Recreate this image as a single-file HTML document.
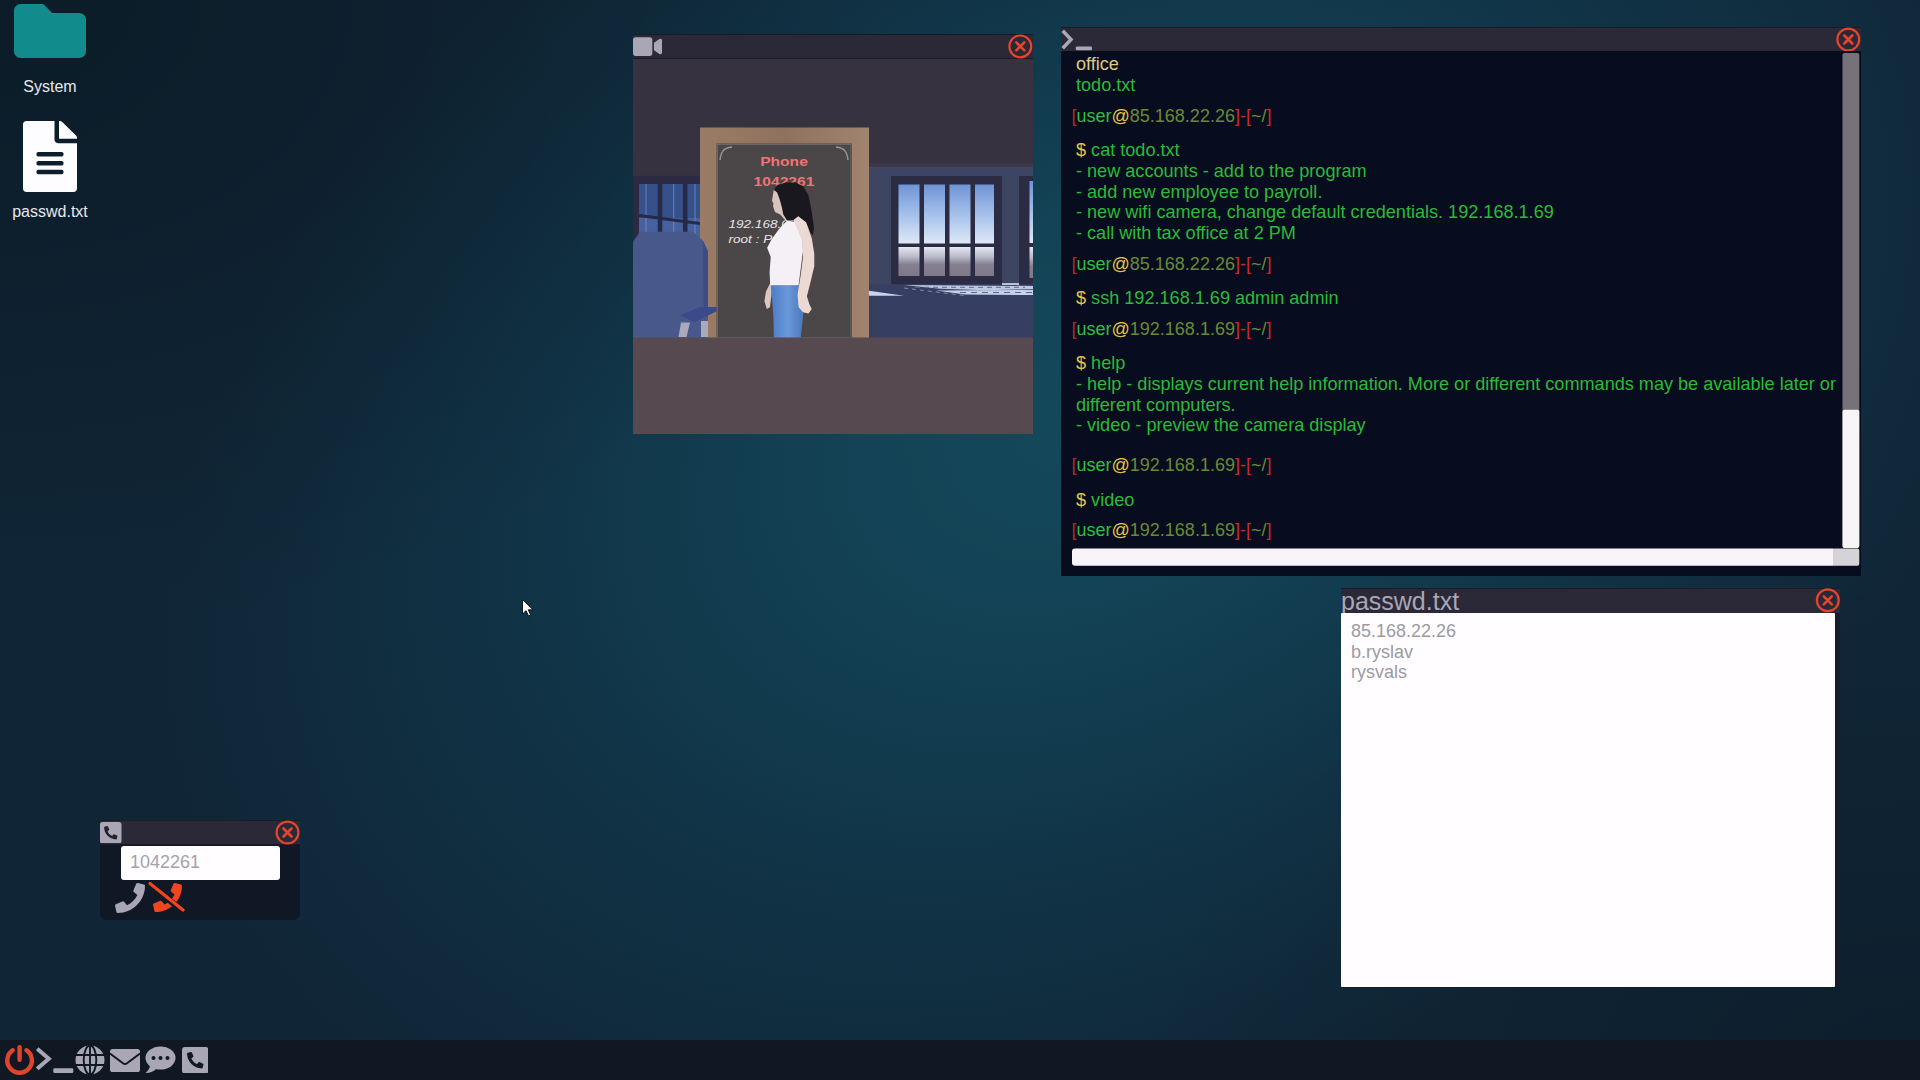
<!DOCTYPE html>
<html lang="en">
<head>
<meta charset="utf-8">
<title>Desktop</title>
<style>
*{box-sizing:border-box;margin:0;padding:0}
html,body{width:1920px;height:1080px;overflow:hidden}
body{position:relative;font-family:"Liberation Sans",sans-serif;background:#102637}
.abs{position:absolute}
.tb{position:absolute;background:#2b2937;border-top:1px solid #1b1a26;border-bottom:1px solid #1b1a26}
.close{position:absolute;width:24px;height:24px}
.lbl{position:absolute;color:#e8e8ee;font-size:16px;line-height:18px;text-align:center;white-space:nowrap}
/* terminal */
#term{position:absolute;left:1061px;top:51px;width:800px;height:525px;background:#070d1e}
#term .l{position:absolute;left:15px;font-size:18.1px;line-height:21px;white-space:nowrap}
#term .p{left:10.500px;font-size:18px}
.r{color:#cc2a2a}.r1{color:#b22828}.g{color:#2cba38}.u{color:#34bc42}.y{color:#e6c648}.o{color:#6a8935}.pale{color:#dfca84}
/* passwd */
#pw{position:absolute;left:1341px;top:613px;width:494px;height:374px;background:#fffdff;border-radius:1px}
#pw div{position:absolute;left:10px;font-size:18px;line-height:21px;color:#9d9ba1;white-space:nowrap}
#taskbar{position:absolute;left:0;top:1040px;width:1920px;height:40px;background:#0f1823}
</style>
</head>
<body>
<svg class="abs" style="left:0;top:0" width="1920" height="1080" viewBox="0 0 1920 1080"><defs>
<radialGradient id="bgg" gradientUnits="userSpaceOnUse" cx="0" cy="0" r="1" gradientTransform="translate(1100 400) rotate(150) scale(1000 700)"><stop offset="0" stop-color="#13495a"/><stop offset=".2" stop-color="#134557"/><stop offset=".4" stop-color="#123d50"/><stop offset=".6" stop-color="#113447"/><stop offset=".8" stop-color="#102d3f"/><stop offset="1" stop-color="#102637"/></radialGradient>
<radialGradient id="c1" gradientUnits="userSpaceOnUse" cx="0" cy="0" r="1" gradientTransform="scale(900 650)"><stop offset="0" stop-color="#000" stop-opacity=".28"/><stop offset="1" stop-color="#000" stop-opacity="0"/></radialGradient>
<radialGradient id="c2" gradientUnits="userSpaceOnUse" cx="0" cy="0" r="1" gradientTransform="translate(1920 1080) scale(800 520)"><stop offset="0" stop-color="#000" stop-opacity=".2"/><stop offset="1" stop-color="#000" stop-opacity="0"/></radialGradient>
</defs><rect width="1920" height="1080" fill="url(#bgg)"/><rect width="1920" height="1080" fill="url(#c1)"/><rect width="1920" height="1080" fill="url(#c2)"/></svg>

<!-- desktop icons -->
<svg class="abs" style="left:14px;top:-5.200px" width="72" height="72" viewBox="0 0 512 512"><path fill="#118b8c" d="M464 128H272l-64-64H48C21.490 64 0 85.490 0 112v288c0 26.510 21.490 48 48 48h416c26.510 0 48-21.490 48-48V176c0-26.510-21.490-48-48-48z"/></svg>
<div class="lbl" style="left:0;width:100px;top:78px">System</div>
<svg class="abs" style="left:23px;top:121px" width="54" height="71" viewBox="0 0 384 512" preserveAspectRatio="none"><path fill="#fdfcff" d="M224 136V0H24C10.700 0 0 10.700 0 24v464c0 13.300 10.700 24 24 24h336c13.300 0 24-10.700 24-24V160H248c-13.200 0-24-10.800-24-24zm64 236c0 6.600-5.400 12-12 12H108c-6.600 0-12-5.400-12-12v-8c0-6.600 5.400-12 12-12h168c6.600 0 12 5.400 12 12v8zm0-64c0 6.600-5.400 12-12 12H108c-6.600 0-12-5.400-12-12v-8c0-6.600 5.400-12 12-12h168c6.600 0 12 5.400 12 12v8zm0-72v8c0 6.600-5.400 12-12 12H108c-6.600 0-12-5.400-12-12v-8c0-6.600 5.400-12 12-12h168c6.600 0 12 5.400 12 12zm96-114.100v6.100H256V0h6.100c6.400 0 12.500 2.500 17 7l97.900 98c4.500 4.500 7 10.600 7 16.900z"/></svg>
<div class="lbl" style="left:0;width:100px;top:203px">passwd.txt</div>

<!-- VIDEO WINDOW -->
<div class="tb" style="left:633px;top:34px;width:400px;height:25px"></div>
<svg class="abs" style="left:633px;top:34px" width="29" height="25" viewBox="0 0 576 512" preserveAspectRatio="none"><path fill="#a9a6b5" d="M336.200 64H47.800C21.400 64 0 85.400 0 111.800v288.400C0 426.600 21.400 448 47.800 448h288.400c26.400 0 47.800-21.400 47.800-47.800V111.800c0-26.400-21.400-47.800-47.800-47.800zm189.400 37.700L416 177.300v157.400l109.600 75.500c21.200 14.600 50.400-.3 50.400-25.800V127.500c0-25.400-29.100-40.400-50.400-25.800z"/></svg>
<svg class="abs" style="left:1007px;top:33px" width="26" height="26" viewBox="-0.3 -0.4 26 26"><circle cx="13" cy="13" r="10.900" fill="none" stroke="#e4452c" stroke-width="2.200"/><path d="M9 9l8 8M17 9l-8 8" stroke="#e4452c" stroke-width="2.600" stroke-linecap="round"/></svg>
<svg id="video" class="abs" style="left:633px;top:59px" width="400" height="375" viewBox="633 59 400 375">

<defs>
<linearGradient id="sky" x1="0" y1="0" x2="0" y2="1"><stop offset="0" stop-color="#6f93d6"/><stop offset=".55" stop-color="#a9c4ec"/><stop offset="1" stop-color="#dfe8f6"/></linearGradient>
<linearGradient id="gnd" x1="0" y1="0" x2="0" y2="1"><stop offset="0" stop-color="#e4e8f2"/><stop offset=".35" stop-color="#b8b8c8"/><stop offset=".6" stop-color="#85808f"/><stop offset="1" stop-color="#7e7888"/></linearGradient>
<linearGradient id="wood" x1="0" y1="0" x2="1" y2="0"><stop offset="0" stop-color="#9a7c66"/><stop offset=".5" stop-color="#8f725e"/><stop offset="1" stop-color="#a08470"/></linearGradient>
<linearGradient id="lwin" x1="0" y1="0" x2="0" y2="1"><stop offset="0" stop-color="#34508c"/><stop offset="1" stop-color="#4a68a4"/></linearGradient>
<linearGradient id="jeans" x1="0" y1="0" x2="1" y2="0"><stop offset="0" stop-color="#4c7cc4"/><stop offset=".5" stop-color="#6a98da"/><stop offset="1" stop-color="#4a74b8"/></linearGradient>
</defs>
<rect x="633" y="59" width="400" height="375" fill="#37323f"/>
<!-- back wall -->
<rect x="633" y="176" width="70" height="162" fill="#3c4462"/>
<rect x="869" y="163" width="164" height="6" fill="#3a3748"/>
<rect x="869" y="167" width="164" height="171" fill="#3d4563"/>
<!-- left window -->
<rect x="633" y="175.800" width="67" height="66" fill="#2b2a42"/>
<rect x="639" y="184" width="61" height="34" fill="#36508a"/>
<rect x="639" y="218" width="61" height="22" fill="#46629e"/>
<path d="M646 184v54M673.700 184v54M695 184v54" stroke="#7a98d0" stroke-width="1" opacity=".7"/>
<path d="M660 184v56M685.200 184v56" stroke="#262a48" stroke-width="4.600"/>
<path d="M639 215.500l61 8" stroke="#262a48" stroke-width="3"/>
<!-- right window -->
<rect x="891" y="176" width="111" height="108.500" fill="#2b2c44"/>
<g>
<rect x="898.500" y="184.500" width="21" height="59" fill="url(#sky)"/><rect x="924" y="184.500" width="21" height="59" fill="url(#sky)"/><rect x="949.500" y="184.500" width="21" height="59" fill="url(#sky)"/><rect x="975" y="184.500" width="19" height="59" fill="url(#sky)"/>
<rect x="898.500" y="247" width="21" height="29" fill="url(#gnd)"/><rect x="924" y="247" width="21" height="29" fill="url(#gnd)"/><rect x="949.500" y="247" width="21" height="29" fill="url(#gnd)"/><rect x="975" y="247" width="19" height="29" fill="url(#gnd)"/>
</g>
<!-- far right window -->
<rect x="1019" y="176" width="14" height="108.500" fill="#2b2c44"/>
<rect x="1029.500" y="181" width="3.500" height="62" fill="url(#sky)"/><rect x="1029.500" y="247" width="3.500" height="31" fill="url(#gnd)"/>
<!-- floor -->
<rect x="869" y="284.500" width="164" height="54" fill="#363e62"/>
<path d="M869 290.800L904 295.700L869 295.700z" fill="#c9d3ea"/>
<path d="M904 285L1033 286L1033 289.300L985 290.200L940 288.800z" fill="#bcc8e4"/>
<path d="M936 290.600L1033 290L1033 295L965 294.500z" fill="#c6d0e8"/>
<path d="M915 287.300h110" stroke="#5a6894" stroke-width="1" stroke-dasharray="5 4"/>
<path d="M960 292.500h73" stroke="#5a6894" stroke-width="1.200" stroke-dasharray="6 5"/>
<path d="M904 288l60 7.500" stroke="#7f8db8" stroke-width="1" stroke-dasharray="4 4"/>
<path d="M1002 283.300h17v1.500h-17z" fill="#e8eef8"/>
<!-- board -->
<rect x="700" y="127.500" width="169" height="210.500" fill="url(#wood)"/>
<rect x="716.500" y="143.500" width="135.500" height="194.500" fill="#4b4647"/>
<rect x="717.500" y="144.500" width="133.500" height="193" fill="none" stroke="#6a6668" stroke-width="1"/>
<path d="M720 160c1-8 3-12 12-13M848 160c-1-8-3-12-12-13" fill="none" stroke="#9a989c" stroke-width="1.400"/>
<g transform="translate(784 0) scale(1.14 1) translate(-784 0)" font-family="Liberation Sans,sans-serif" font-weight="bold" font-size="13.700" fill="#f07474" text-anchor="middle"><text x="784" y="166.500">Phone</text><text x="784" y="186.200">1042261</text></g>
<g transform="translate(728.500 0) scale(1.15 1) translate(-728.500 0)" font-family="Liberation Sans,sans-serif" font-style="italic" font-size="11.800" fill="#e6e4e8"><text x="728.500" y="227.800">192.168.0.</text><text x="728.500" y="243.300">root : P</text></g>
<!-- chair -->
<path d="M633 241.700l7-10h53l10 9l5 11v86.300h-75z" fill="#48588a"/>
<path d="M703 240.700l5 11v55h-4.500z" fill="#3d4d84"/>
<path d="M680 315.500l20-8.500h16.700v4.300l-22 10.700z" fill="#3a4a8a"/>
<path d="M681 322.500h9l-3.500 14.500h-8zM701 321h7v16h-7z" fill="#a9a9bb"/>
<!-- woman -->
<path d="M773.9 189.2L772.8 195.5L772.0 201.0L773.4 203.3L773.1 206.5L775.0 212.0L780.2 214.4L785.7 220.7L793.5 220.7L792.0 212.8L782.5 206.5L779.4 193.9z" fill="#d9c3bd"/>
<path d="M773.9 190.0L777.0 185.2L785.7 182.6L795.1 182.6L803.0 186.0L808.5 195.5L811.7 211.2L814.0 228.5L812.8 235.6L810.1 231.7L807.7 225.4L803.0 220.7L798.3 216.7L793.5 219.9L787.2 220.7L783.3 214.4L781.7 206.5L779.4 198.6L777.0 192.3z" fill="#1a181f"/>
<path d="M769.9 283.7L766.0 291.5L764.4 301.0L766.8 308.9L769.9 307.3L771.5 294.7L772.3 285.2z" fill="#dcc6c0"/>
<path d="M770.7 285.2L772.3 301.0L773.4 316.7L773.9 338.0L800.6 338.0L803.0 316.7L804.9 301.0L802.2 291.5L798.6 285.2z" fill="url(#jeans)"/>
<path d="M787.2 220.4L779.4 228.5L771.5 239.6L767.1 247.8L770.7 256.9L769.6 272.6L770.2 285.2L798.6 285.2L800.6 269.5L803.0 250.6L802.2 234.8L796.7 222.2z" fill="#f4f0f5"/>
<path d="M793.5 219.9L798.3 216.3L806.1 222.2L811.7 238.0L814.3 253.7L814.3 266.3L810.1 283.7L806.9 296.3L809.3 304.1L811.7 308.9L808.5 313.6L803.0 312.3L798.6 307.3L797.5 294.7L800.6 275.8L803.0 256.9L802.2 241.1z" fill="#ecd9d3"/>
<!-- desk -->
<rect x="633" y="337.500" width="400" height="96.500" fill="#56494f"/>

</svg>

<!-- TERMINAL WINDOW -->
<div class="tb" style="left:1061px;top:27px;width:800px;height:25px"></div>
<svg class="abs" style="left:1061px;top:27px" width="34" height="25" viewBox="0 0 34 25"><path d="M1.700 3.700L10 12.500L1.700 21.300" fill="none" stroke="#a9a6b5" stroke-width="3.500" stroke-linejoin="miter"/><rect x="14.800" y="19.400" width="16.200" height="3.800" rx="1" fill="#a9a6b5"/></svg>
<svg class="abs" style="left:1835px;top:26px" width="26" height="26" viewBox="-0.3 -0.5 26 26"><circle cx="13" cy="13" r="10.900" fill="none" stroke="#e4452c" stroke-width="2.200"/><path d="M9 9l8 8M17 9l-8 8" stroke="#e4452c" stroke-width="2.600" stroke-linecap="round"/></svg>
<div id="term">
<div class="l" style="top:3.3px"><span class="pale">office</span></div>
<div class="l" style="top:24.1px"><span class="g">todo.txt</span></div>
<div class="l p" style="top:54.9px"><span class="r1">[</span><span class="u">user</span><span class="y">@</span><span class="o">85.168.22.26</span><span class="r">]-[</span><span class="o">~/</span><span class="r">]</span></div>
<div class="l" style="top:89.1px"><span class="y">$</span> <span class="g">cat todo.txt</span></div>
<div class="l" style="top:109.7px"><span class="g">- new accounts - add to the program</span></div>
<div class="l" style="top:130.5px"><span class="g">- add new employee to payroll.</span></div>
<div class="l" style="top:151.4px"><span class="g">- new wifi camera, change default credentials. 192.168.1.69</span></div>
<div class="l" style="top:172.0px"><span class="g">- call with tax office at 2 PM</span></div>
<div class="l p" style="top:202.8px"><span class="r1">[</span><span class="u">user</span><span class="y">@</span><span class="o">85.168.22.26</span><span class="r">]-[</span><span class="o">~/</span><span class="r">]</span></div>
<div class="l" style="top:237.0px"><span class="y">$</span> <span class="g">ssh 192.168.1.69 admin admin</span></div>
<div class="l p" style="top:268.2px"><span class="r1">[</span><span class="u">user</span><span class="y">@</span><span class="o">192.168.1.69</span><span class="r">]-[</span><span class="o">~/</span><span class="r">]</span></div>
<div class="l" style="top:302.4px"><span class="y">$</span> <span class="g">help</span></div>
<div class="l" style="top:323.0px"><span class="g">- help - displays current help information. More or different commands may be available later or</span></div>
<div class="l" style="top:343.8px"><span class="g">different computers.</span></div>
<div class="l" style="top:364.4px"><span class="g">- video - preview the camera display</span></div>
<div class="l p" style="top:403.7px"><span class="r1">[</span><span class="u">user</span><span class="y">@</span><span class="o">192.168.1.69</span><span class="r">]-[</span><span class="o">~/</span><span class="r">]</span></div>
<div class="l" style="top:438.5px"><span class="y">$</span> <span class="g">video</span></div>
<div class="l p" style="top:468.8px"><span class="r1">[</span><span class="u">user</span><span class="y">@</span><span class="o">192.168.1.69</span><span class="r">]-[</span><span class="o">~/</span><span class="r">]</span></div>
<svg class="abs" style="left:0;top:0" width="800" height="525" viewBox="1061 51 800 525">
<rect x="1842.500" y="53" width="16.800" height="495" rx="2" fill="#777279"/>
<rect x="1842.500" y="409.700" width="16.800" height="138.200" rx="2" fill="#f8f5f9"/>
<path d="M1075 548.400h758v17.300h-758a3 3 0 0 1-3-3v-11.300a3 3 0 0 1 3-3z" fill="#f8f5f9"/>
<path d="M1833 548.400h24.300a2 2 0 0 1 2 2v13.300a2 2 0 0 1-2 2h-24.300z" fill="#d6d3d8"/>
</svg>

</div>

<!-- PASSWD WINDOW -->
<div class="tb" style="left:1341px;top:588px;width:499px;height:26px"></div>
<div class="abs" style="left:1341px;top:613px;width:499px;height:375px;background:#171c2c"></div>
<div class="abs" style="left:1341px;top:586px;font-size:25px;line-height:30px;color:#a9a6b5;white-space:nowrap">passwd.txt</div>
<svg class="abs" style="left:1815px;top:587px" width="26" height="26" viewBox="0.2 -0.3 26 26"><circle cx="13" cy="13" r="10.900" fill="none" stroke="#e4452c" stroke-width="2.200"/><path d="M9 9l8 8M17 9l-8 8" stroke="#e4452c" stroke-width="2.600" stroke-linecap="round"/></svg>
<div id="pw">
<div style="top:7.800px">85.168.22.26</div>
<div style="top:28.600px">b.ryslav</div>
<div style="top:49.400px">rysvals</div>
</div>

<!-- PHONE WINDOW -->

<div class="abs" style="left:100px;top:820px;width:199.500px;height:99.500px;background:#101826;border-radius:2px 2px 7px 7px"></div>
<div class="abs" style="left:100px;top:820px;width:199.500px;height:24.500px;background:#2b2937;border-top:1px solid #1b1a26;border-bottom:1px solid #1b1a26"></div>
<svg class="abs" style="left:100px;top:821.500px" width="21.500" height="21.500" viewBox="0 0 22 22"><rect width="22" height="22" rx="2.600" fill="#a9a6b5"/><g transform="translate(4.200 4.200) scale(.0266)"><path fill="#23212f" d="M497.390 361.800l-112-48a24 24 0 0 0-28 6.900l-49.600 60.600A370.660 370.660 0 0 1 130.600 204.110l60.600-49.600a23.940 23.940 0 0 0 6.900-28l-48-112A24.160 24.160 0 0 0 122.600.610l-104 24A24 24 0 0 0 0 48c0 256.500 207.900 464 464 464a24 24 0 0 0 23.400-18.600l24-104a24.290 24.290 0 0 0-14.010-27.600z"/></g></svg>
<svg class="abs" style="left:274px;top:819px" width="26" height="26" viewBox="-0.5 -0.5 26 26"><circle cx="13" cy="13" r="10.900" fill="none" stroke="#e4452c" stroke-width="2.200"/><path d="M9 9l8 8M17 9l-8 8" stroke="#e4452c" stroke-width="2.600" stroke-linecap="round"/></svg>
<div class="abs" style="left:120.500px;top:845.500px;width:159px;height:34px;background:#fffdff;border-radius:3px"></div>
<div class="abs" style="left:130px;top:852px;font-size:18px;line-height:21px;color:#a5a2aa;white-space:nowrap">1042261</div>
<svg class="abs" style="left:115px;top:882.500px" width="30" height="30" viewBox="0 0 512 512"><path fill="#a9a6b5" d="M493.400 24.600l-104-24c-11.300-2.600-22.900 3.300-27.500 13.900l-48 112c-4.200 9.800-1.400 21.300 6.900 28l60.600 49.600c-36 76.700-98.900 140.500-177.200 177.200l-49.600-60.600c-6.800-8.300-18.200-11.100-28-6.900l-112 48C3.900 366.500-2 378.100.600 389.400l24 104C27.100 504.200 36.700 512 48 512c256.100 0 464-207.500 464-464 0-11.200-7.700-20.900-18.600-23.400z"/></svg>
<svg class="abs" style="left:148px;top:882px" width="38" height="31" viewBox="0 0 38 31"><g transform="translate(5 1) scale(.0566)"><path fill="#f0451f" d="M493.400 24.600l-104-24c-11.300-2.600-22.900 3.300-27.500 13.900l-48 112c-4.200 9.800-1.400 21.300 6.900 28l60.600 49.600c-36 76.700-98.900 140.500-177.200 177.200l-49.600-60.600c-6.800-8.300-18.200-11.100-28-6.900l-112 48C3.900 366.500-2 378.100.600 389.400l24 104C27.100 504.200 36.700 512 48 512c256.100 0 464-207.500 464-464 0-11.200-7.700-20.900-18.600-23.400z"/></g><path d="M2 3l33 26" stroke="#101826" stroke-width="6"/><path d="M2 1.500l33 26.500" stroke="#f0451f" stroke-width="3.200" stroke-linecap="round"/></svg>


<!-- cursor -->
<svg class="abs" style="left:521px;top:598px" width="14" height="20" viewBox="0 0 14 20"><path d="M1.500 1.500v14.500l3.600-3.300l2.400 5.300l2.200-1l-2.400-5.200h4.800z" fill="#fff" stroke="#0a1624" stroke-width="1"/></svg>

<!-- TASKBAR -->
<div id="taskbar"></div>

<svg class="abs" style="left:3px;top:1043px" width="34" height="34" viewBox="0 0 34 34"><path d="M9.800 7.200a12.300 12.300 0 1 0 13.600 0" fill="none" stroke="#e0452a" stroke-width="4.400" stroke-linecap="round"/><path d="M16.600 4.200v12.500" stroke="#e0452a" stroke-width="4.400" stroke-linecap="round"/></svg>
<svg class="abs" style="left:35px;top:1045px" width="40" height="30" viewBox="0 0 40 30"><path d="M2.200 3.800l11.600 10l-11.600 10" fill="none" stroke="#a9a6b5" stroke-width="4"/><rect x="18.300" y="23.300" width="20" height="4.700" rx="1.200" fill="#a9a6b5"/></svg>
<svg class="abs" style="left:75px;top:1045px" width="30" height="30" viewBox="0 0 30 30"><circle cx="15" cy="15" r="14.500" fill="#a9a6b5"/><g fill="none" stroke="#0f1823" stroke-width="1.900"><ellipse cx="15" cy="15" rx="6.300" ry="14.500"/><path d="M15 0v30M1 10h28M1 20h28"/></g></svg>
<svg class="abs" style="left:110px;top:1049px" width="30" height="23" viewBox="0 0 30 23"><rect width="30" height="23" rx="2.600" fill="#a9a6b5"/><path d="M0 4.500l13 9.800a3.300 3.300 0 0 0 4 0l13-9.800" fill="none" stroke="#0f1823" stroke-width="1.900"/></svg>
<svg class="abs" style="left:145px;top:1046px" width="31" height="28" viewBox="0 0 31 28"><ellipse cx="15.500" cy="12" rx="15" ry="11.500" fill="#a9a6b5"/><path d="M5 19c0 3-2 6-4.500 8c4 .3 8.500-1.500 11-4.500z" fill="#a9a6b5"/><g fill="#0f1823"><circle cx="8.500" cy="12" r="2"/><circle cx="15.500" cy="12" r="2"/><circle cx="22.500" cy="12" r="2"/></g></svg>
<svg class="abs" style="left:181.500px;top:1046.500px" width="26.500" height="26.500" viewBox="0 0 22 22"><rect width="22" height="22" rx="2.400" fill="#a9a6b5"/><g transform="translate(4.200 4.200) scale(.0266)"><path fill="#0f1823" d="M497.390 361.800l-112-48a24 24 0 0 0-28 6.900l-49.600 60.600A370.660 370.660 0 0 1 130.600 204.110l60.600-49.600a23.940 23.940 0 0 0 6.900-28l-48-112A24.160 24.160 0 0 0 122.600.610l-104 24A24 24 0 0 0 0 48c0 256.500 207.900 464 464 464a24 24 0 0 0 23.400-18.600l24-104a24.290 24.290 0 0 0-14.010-27.600z"/></g></svg>


</body>
</html>
